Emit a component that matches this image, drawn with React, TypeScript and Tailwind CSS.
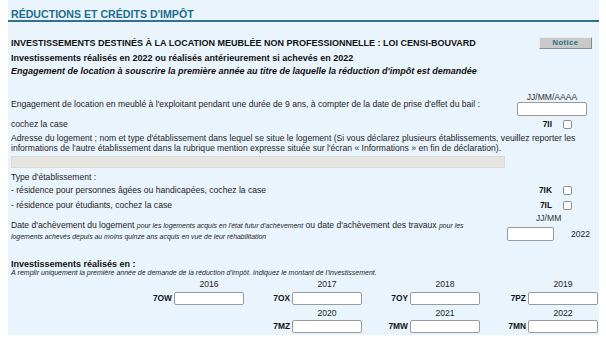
import React from "react";

function Checkbox() {
  return <span className="inline-block w-[9px] h-[9px] rounded-[2px] border border-[#8f8f8f] bg-white" />;
}

function Field({ w, h }: { w: string; h: string }) {
  return <span className={`block ${w} ${h} rounded-[2px] border border-[#9a9a9a] bg-white`} />;
}

function CodeRow({ left, code, mt }: { left: React.ReactNode; code: string; mt: string }) {
  return (
    <div className={`${mt} h-[12px] flex items-center pl-[3px] pr-[27px]`}>
      <span className="text-[8.6px] leading-[10px]">{left}</span>
      <span className="ml-auto text-[8.4px] font-bold leading-[10px] text-[#111]">{code}</span>
      <span className="ml-[11px] flex items-center">
        <Checkbox />
      </span>
    </div>
  );
}

function YearCell({ year }: { year?: string }) {
  return (
    <div className="flex justify-end">
      <div className="w-[70px] text-center text-[8.6px] leading-[10px]">{year ?? ""}</div>
    </div>
  );
}

function InputCell({ code }: { code?: string }) {
  if (!code) return <div />;
  return (
    <div className="flex justify-end items-center">
      <span className="text-[8.4px] font-bold leading-[10px] text-[#111] mr-[2px]">{code}</span>
      <span className="block w-[70px] h-[13px] rounded-[2px] border border-[#9a9a9a] bg-white" />
    </div>
  );
}

export default function App() {
  return (
    <div className="w-[606px] h-[342px] bg-white overflow-hidden font-['Liberation_Sans',Arial,sans-serif] text-[#1e1e1e]">
      <div className="ml-[8px] w-[591px] bg-[#eaf4fd] pb-[2px]">
        <div className="h-[22px] pt-[8px] pl-[3px] border-b-2 border-[#2f7390] text-[10.6px] leading-[12px] font-bold text-[#1d6d8e]">
          RÉDUCTIONS ET CRÉDITS D'IMPÔT
        </div>

        <div className="mt-[15px] h-[12px] flex items-center justify-between pl-[3px] pr-[7px]">
          <span className="text-[9px] font-bold leading-[10px] text-[#111]">
            INVESTISSEMENTS DESTINÉS À LA LOCATION MEUBLÉE NON PROFESSIONNELLE : LOI CENSI-BOUVARD
          </span>
          <span className="w-[53px] h-[12px] flex items-center justify-center bg-[#c9c9c9] border border-t-[#ececec] border-l-[#ececec] border-b-[#8c8c8c] border-r-[#8c8c8c] text-[7.5px] font-bold tracking-[0.5px] text-[#1a6f80]">
            Notice
          </span>
        </div>

        <div className="mt-[3px] pl-[3px] text-[9px] font-bold leading-[13px] text-[#111]">
          Investissements réalisés en 2022 ou réalisés antérieurement si achevés en 2022
        </div>
        <div className="pl-[3px] text-[9px] font-bold italic leading-[13px] text-[#111]">
          Engagement de location à souscrire la première année au titre de laquelle la réduction d'impôt est demandée
        </div>

        <div className="mt-[14px] flex">
          <div className="pl-[3px] pt-[7px] text-[8.6px] leading-[10px] whitespace-nowrap">
            Engagement de location en meublé à l'exploitant pendant une durée de 9 ans, à compter de la date de prise d'effet du bail :
          </div>
          <div className="ml-auto mr-[12px] w-[70px] shrink-0">
            <div className="text-center text-[8.6px] leading-[10px] text-[#333]">JJ/MM/AAAA</div>
            <Field w="w-[70px]" h="h-[14px]" />
          </div>
        </div>

        <CodeRow mt="mt-[2px]" left="cochez la case" code="7II" />

        <div className="mt-[3px] pl-[3px] text-[8.6px] leading-[10px]">
          <div className="whitespace-nowrap">
            Adresse du logement ; nom et type d'établissement dans lequel se situe le logement (Si vous déclarez plusieurs établissements, veuillez reporter les
          </div>
          <div className="whitespace-nowrap">
            informations de l'autre établissement dans la rubrique mention expresse située sur l'écran « Informations » en fin de déclaration).
          </div>
        </div>

        <div className="mt-[3px] ml-[3px] w-[494px] h-[12px] bg-[#e6e4df] border border-[#dcdad5]" />

        <div className="mt-[4px] pl-[3px] text-[8.6px] leading-[10px]">Type d'établissement :</div>

        <CodeRow mt="mt-[2px]" left="- résidence pour personnes âgées ou handicapées, cochez la case" code="7IK" />
        <CodeRow mt="mt-[3px]" left="- résidence pour étudiants, cochez la case" code="7IL" />

        <div className="mt-[2px] flex">
          <div className="pl-[3px] pt-[3.5px] leading-[11px] whitespace-nowrap">
            <div>
              <span className="text-[8.6px]">Date d'achèvement du logement </span>
              <span className="text-[6.9px] italic">pour les logements acquis en l'état futur d'achèvement</span>
              <span className="text-[8.6px]"> ou date d'achèvement des travaux </span>
              <span className="text-[6.9px] italic">pour les</span>
            </div>
            <div className="text-[6.9px] italic">
              logements achevés depuis au moins quinze ans acquis en vue de leur réhabilitation
            </div>
          </div>
          <div className="ml-auto mr-[9px] w-[83px] shrink-0">
            <div className="pl-[29px] text-[8.6px] leading-[10px] text-[#333]">JJ/MM</div>
            <div className="mt-[4px] flex items-center">
              <Field w="w-[47px]" h="h-[14px]" />
              <span className="ml-auto text-[8.6px] leading-[10px]">2022</span>
            </div>
          </div>
        </div>

        <div className="mt-[17px] pl-[3px] text-[9px] font-bold leading-[10px] text-[#111]">
          Investissements réalisés en :
        </div>
        <div className="pl-[3px] text-[7px] italic leading-[8px] whitespace-nowrap">
          À remplir uniquement la première année de demande de la réduction d'impôt. Indiquez le montant de l'investissement.
        </div>

        <div className="ml-[118px] w-[472px] grid grid-cols-4">
          <div className="col-span-4 grid grid-cols-4 mt-[2px]">
            <YearCell year="2016" />
            <YearCell year="2017" />
            <YearCell year="2018" />
            <YearCell year="2019" />
          </div>
          <div className="col-span-4 grid grid-cols-4 mt-[3px]">
            <InputCell code="7OW" />
            <InputCell code="7OX" />
            <InputCell code="7OY" />
            <InputCell code="7PZ" />
          </div>
          <div className="col-span-4 grid grid-cols-4 mt-[3px]">
            <YearCell />
            <YearCell year="2020" />
            <YearCell year="2021" />
            <YearCell year="2022" />
          </div>
          <div className="col-span-4 grid grid-cols-4 mt-[2px]">
            <InputCell />
            <InputCell code="7MZ" />
            <InputCell code="7MW" />
            <InputCell code="7MN" />
          </div>
        </div>
      </div>
    </div>
  );
}
